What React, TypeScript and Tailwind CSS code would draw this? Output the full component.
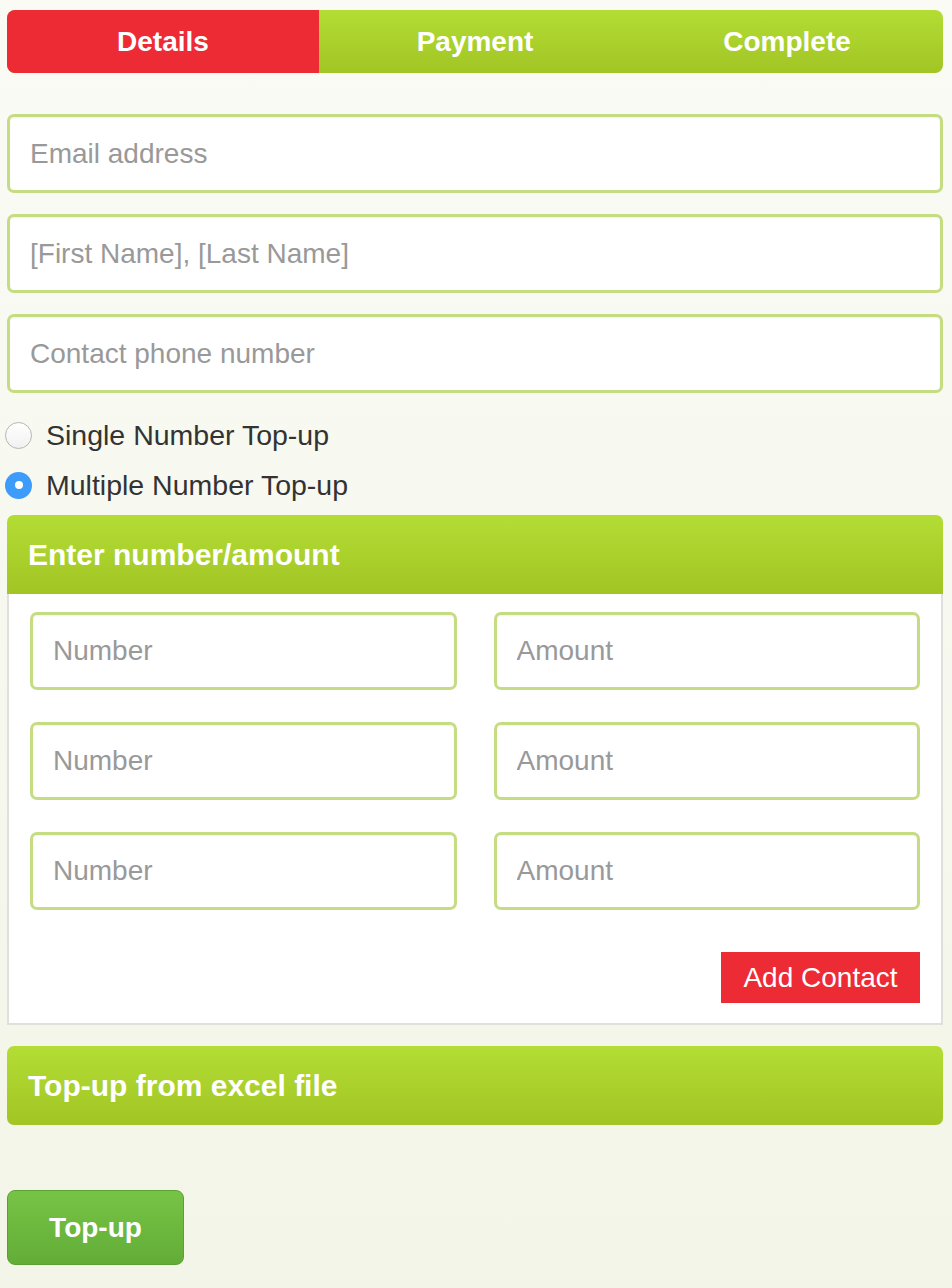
import React from "react";

const font = { fontFamily: '"Liberation Sans", Arial, Helvetica, sans-serif' };

function Field({ placeholder, small }: { placeholder: string; small?: boolean }) {
  return (
    <input
      placeholder={placeholder}
      className={`${small ? "h-[78px]" : "h-[79px]"} w-full rounded-[7px] border-[3px] border-[#c6dc83] bg-white px-[20px] text-[28px] text-[#333] shadow-[inset_0_1px_2px_rgba(0,0,0,0.06)] outline-none placeholder:text-[#999]`}
    />
  );
}

function Radio({ checked, label }: { checked?: boolean; label: string }) {
  return (
    <label className="flex h-[50px] items-center gap-[14px]">
      {checked ? (
        <span className="flex h-[27px] w-[27px] items-center justify-center rounded-full bg-[#3d9bfb]">
          <span className="h-[8px] w-[8px] rounded-full bg-white" />
        </span>
      ) : (
        <span className="h-[27px] w-[27px] rounded-full border border-[#b5b5b5] bg-gradient-to-b from-white to-[#f1f1f1]" />
      )}
      <span className="text-[28.5px] text-[#333]">{label}</span>
    </label>
  );
}

export default function App() {
  const rows = [0, 1, 2];
  return (
    <div
      style={font}
      className="min-h-[1288px] bg-gradient-to-b from-[#fafbf5] to-[#f3f5e8] pl-[7px] pr-[9px] pt-[10px]"
    >
      {/* steps */}
      <div className="grid h-[63px] grid-cols-3 overflow-hidden rounded-[8px] bg-gradient-to-b from-[#b3dd34] to-[#a2c524] text-[28px] font-bold text-white">
        <div className="flex items-center justify-center bg-[#ec2b35]">Details</div>
        <div className="flex items-center justify-center">Payment</div>
        <div className="flex items-center justify-center">Complete</div>
      </div>

      <div className="mt-[41px] flex flex-col gap-[21px]">
        <Field placeholder="Email address" />
        <Field placeholder="[First Name], [Last Name]" />
        <Field placeholder="Contact phone number" />
      </div>

      <div className="-ml-[2px] mt-[17px]">
        <Radio label="Single Number Top-up" />
        <Radio checked label="Multiple Number Top-up" />
      </div>

      {/* number / amount panel */}
      <div className="mt-[5px]">
        <div className="flex h-[79px] items-center rounded-t-[7px] bg-gradient-to-b from-[#b3dd34] to-[#a2c524] px-[21px] text-[30px] font-bold text-white">
          Enter number/amount
        </div>
        <div className="border-2 border-t-0 border-[#dfe0db] bg-white px-[21px] pb-[20px] pt-[18px]">
          <div className="flex flex-col gap-[32px]">
            {rows.map((r) => (
              <div key={r} className="grid grid-cols-2 gap-[37px]">
                <Field small placeholder="Number" />
                <Field small placeholder="Amount" />
              </div>
            ))}
          </div>
          <div className="mt-[42px] flex justify-end">
            <button className="h-[51px] w-[199px] bg-[#ec2b35] text-[28px] text-white">Add Contact</button>
          </div>
        </div>
      </div>

      <div className="mt-[21px] flex h-[79px] items-center rounded-[7px] bg-gradient-to-b from-[#b3dd34] to-[#a2c524] px-[21px] text-[30px] font-bold text-white">
        Top-up from excel file
      </div>

      <button className="mt-[65px] h-[75px] w-[177px] rounded-[8px] border border-[#5c9f33] bg-gradient-to-b from-[#76c446] to-[#63ad37] text-[28px] font-bold text-white">
        Top-up
      </button>
    </div>
  );
}
